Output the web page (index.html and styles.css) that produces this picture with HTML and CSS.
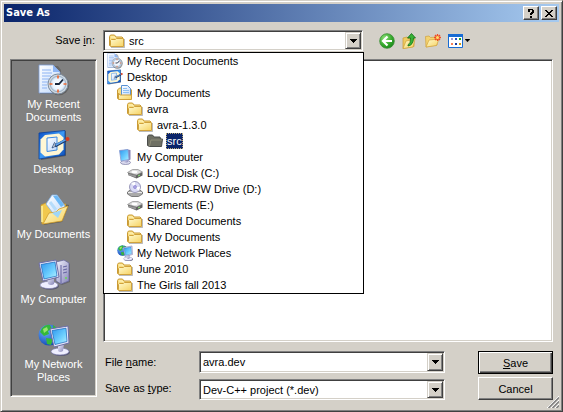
FILE: index.html
```html
<!DOCTYPE html>
<html lang="en">
<head>
<meta charset="utf-8">
<title>Save As</title>
<link rel="stylesheet" href="styles.css">
</head>
<body>
<svg class="defs" width="0" height="0" aria-hidden="true">
  <defs>
    <linearGradient id="gFolder" x1="0" y1="0" x2="1" y2="1"><stop offset="0" stop-color="#fffbd0"/><stop offset="1" stop-color="#f6d262"/></linearGradient>
    <linearGradient id="gPaper" x1="0" y1="0" x2="1" y2="1"><stop offset="0" stop-color="#fff"/><stop offset="1" stop-color="#bfd8fb"/></linearGradient>
    <linearGradient id="gScreen" x1="0" y1="0" x2="1" y2="1"><stop offset="0" stop-color="#2d96ee"/><stop offset=".6" stop-color="#6fd0ff"/><stop offset="1" stop-color="#b8f2ff"/></linearGradient>
    <linearGradient id="gCase" x1="0" y1="0" x2="1" y2="1"><stop offset="0" stop-color="#f4f4ff"/><stop offset="1" stop-color="#8584b8"/></linearGradient>
    <linearGradient id="gBlue" x1="0" y1="0" x2="1" y2="1"><stop offset="0" stop-color="#0c4fc4"/><stop offset=".5" stop-color="#3c9af6"/><stop offset="1" stop-color="#0a48b4"/></linearGradient>
    <radialGradient id="gGreen" cx=".35" cy=".3" r=".8"><stop offset="0" stop-color="#8ee07a"/><stop offset=".6" stop-color="#35a92b"/><stop offset="1" stop-color="#168018"/></radialGradient>
    <radialGradient id="gGlobe" cx=".35" cy=".3" r=".8"><stop offset="0" stop-color="#6fb4ff"/><stop offset="1" stop-color="#0b3fb0"/></radialGradient>
    <radialGradient id="gClock"><stop offset="0" stop-color="#fff"/><stop offset=".7" stop-color="#eaf4ff"/><stop offset="1" stop-color="#b9cfe6"/></radialGradient>
  </defs>
  <symbol id="recent" viewBox="0 0 32 32">
    <path d="M2 2h18l3 4v24H2z" fill="#444" opacity=".4"/>
    <path d="M1 1h14l7 7v21H1z" fill="url(#gPaper)" stroke="#7e9ed8" stroke-width=".8"/>
    <path d="M15 1v7h7z" fill="#8fb6f4"/>
    <path d="M4 6h9M4 9h10M4 12h9M4 15h7M4 18h6M4 21h5M4 24h5" stroke="#8db4f3" stroke-width="1.2"/>
    <circle cx="21" cy="21" r="10.3" fill="#505050" opacity=".6"/>
    <circle cx="20" cy="20" r="10" fill="#ced8e1" stroke="#7e8c9c"/>
    <circle cx="20" cy="20" r="7.8" fill="url(#gClock)" stroke="#8fa3b8" stroke-width=".7"/>
    <path d="M20 11.5v3M20 25.5v3M11.5 20h3M25.5 20h3" stroke="#f06a32" stroke-width="1.7"/>
    <path d="M17 20h4l4-4.5" fill="none" stroke="#18263c" stroke-width="1.8"/>
  </symbol>
  <symbol id="desktop" viewBox="0 0 32 32">
    <path d="M3 4l25-2v25L3 31z" fill="#333" opacity=".5"/>
    <path d="M1 4L27 1.500v24.500L1 30z" fill="url(#gBlue)" stroke="#0a419c" stroke-width=".8"/>
    <path d="M7 6l14-1.500 4.500 4v12l-4.500 5-14 2-4.500-4v-13z" fill="#fff7d5"/>
    <path d="M9 9l10-1v13l-10 1.500z" fill="url(#gPaper)" stroke="#3c8ae2" stroke-width="1"/>
    <path d="M14 19l2.500-5.500 2.500 3z" fill="#eee" stroke="#25477c" stroke-width=".8"/>
    <path d="M17 17l11-6" stroke="#1c3460" stroke-width="3"/>
    <path d="M17.500 16.300l10-5.500" stroke="#5ba3ee" stroke-width="1.600"/>
    <circle cx="29.500" cy="10" r="2" fill="#d83a1c"/>
  </symbol>
  <symbol id="docs" viewBox="0 0 32 32">
    <path d="M5 31l19-3 7-17-5-1z" fill="#333" opacity=".5"/>
    <path d="M3 11l5-2 3 2 17-1-4 15L4 30z" fill="#f1c84d" stroke="#c6952a" stroke-width=".8"/>
    <path d="M14 1h5l8 11-10 10L8 10z" fill="url(#gPaper)" stroke="#7fb0e6" stroke-width=".8"/>
    <path d="M15 2l8 11 3-2-7-9.500z" fill="#6bb8f6"/>
    <path d="M12 8l6 8" stroke="#b6dcfb" stroke-width="3"/>
    <path d="M5 30l6-11 7-1 3-3 9-3-6 15z" fill="url(#gFolder)" stroke="#d09d2b" stroke-width=".8"/>
    <path d="M14 19l10-3-4 8z" fill="#9ed6f8"/>
    <path d="M4 12v16" stroke="#fff3a1" stroke-width="1.500"/>
  </symbol>
  <symbol id="computer" viewBox="0 0 32 32">
    <path d="M18 4l9-2 5 3v18l-8 3-6-3z" fill="#555" opacity=".6"/>
    <path d="M18 3l8-2 5 3v18l-8 3-5-3z" fill="url(#gCase)" stroke="#68689d" stroke-width=".8"/>
    <path d="M23 6v18M25 8l4-1M25 11l4-1M25 14l4-1" stroke="#6361a0"/>
    <circle cx="28" cy="19" r="1" fill="#69d955"/>
    <ellipse cx="12" cy="27" rx="9" ry="3.800" fill="#575771"/>
    <ellipse cx="11" cy="26" rx="9" ry="3.600" fill="#eeeeff" stroke="#8585b4" stroke-width=".7"/>
    <path d="M9 19l7-1v7q-3 2-6 0z" fill="url(#gCase)"/>
    <path d="M1 4l17-3 3 17-16 4z" fill="#e9e9fa" stroke="#6c6da6"/>
    <path d="M3 5.500L17 3l2 14-13 3z" fill="url(#gScreen)" stroke="#1764b9" stroke-width=".7"/>
  </symbol>
  <symbol id="monitor" viewBox="0 0 16 16">
    <ellipse cx="8.500" cy="13.500" rx="5" ry="2" fill="#dcdcf0" stroke="#77779f" stroke-width=".7"/>
    <path d="M7 10h4v3q-2 1-4 0z" fill="url(#gCase)"/>
    <path d="M2.500 1.500l8-1 3 .500v9.500l-2 1z" fill="#8583b5"/>
    <path d="M2.500 1.500L11 .500l1 10-8 1.500z" fill="url(#gScreen)" stroke="#8a9bd0" stroke-width=".8"/>
  </symbol>
  <symbol id="network" viewBox="0 0 32 32">
    <circle cx="11" cy="11" r="10.500" fill="url(#gGlobe)"/>
    <path d="M4 4q4-4 8-3l2 4-4 2 1 3-5 2-4-4zM8 14l7 1-2 6-4-1zM15 1l5 4-5 2z" fill="#35b83b"/>
    <path d="M5 5l4-2 1 3-4 3z" fill="#9ae56c"/>
    <ellipse cx="23" cy="28.500" rx="9" ry="3.500" fill="#575771"/>
    <ellipse cx="22" cy="27.500" rx="9" ry="3.500" fill="#eeeeff" stroke="#7878a8" stroke-width=".7"/>
    <path d="M20 20h6l-1 7q-3 2-5 0z" fill="url(#gCase)"/>
    <path d="M12 5l18-3 1 17-15 4z" fill="#e9e9fa" stroke="#6c6da6"/>
    <path d="M14 6.500l14-2.300 1 13.300-12 3z" fill="url(#gScreen)" stroke="#1764b9" stroke-width=".7"/>
  </symbol>
  <symbol id="folder" viewBox="0 0 16 16">
    <path d="M2 14.500h13.500V6" fill="none" stroke="#777" opacity=".5"/>
    <path d="M.5 12.500v-9l1-1.500h4l1.500 2h6l1 1v8.500h-12z" fill="#f9de83" stroke="#c99a35"/>
    <path d="M2.500 13.500l-1-1v-5l1-1h3.500l1.500-1h6.500l.5.500v7.500z" fill="url(#gFolder)" stroke="#d0a23c"/>
    <path d="M2 4h3.500l1 1.500" fill="none" stroke="#fff7c5"/>
  </symbol>
  <symbol id="folder-selected" viewBox="0 0 16 16">
    <path d="M.5 12.500v-9l1-1.500h4l1.500 2h6l.5 2h2l-1 7.500h-12z" fill="#6f7064" stroke="#4b4d4a"/>
    <path d="M2.500 13l1.500-6h11" fill="none" stroke="#8e8d78"/>
  </symbol>
  <symbol id="docs-small" viewBox="0 0 16 16">
    <path d="M.5 13.500V5l2-2h10l2 2v8.500z" fill="#f9de83" stroke="#c99a35"/>
    <path d="M4.500 11V.500h6l3 3V11z" fill="url(#gPaper)" stroke="#5991d3"/>
    <path d="M6 3.500h4M6 5.500h6M6 7.500h6" stroke="#8cc0f3"/>
    <path d="M1.500 14.500V8l1.500 2h11l.5 1v3.500z" fill="url(#gFolder)" stroke="#d0a23c"/>
  </symbol>
  <symbol id="drive" viewBox="0 0 16 16">
    <path d="M1 8l5-3h5l4.500 2.500v3l-6 3L1 10z" fill="#626262"/>
    <path d="M.5 7.500l5-3H11l4.500 2.500-6 3z" fill="#dedede" stroke="#8b8b8b" stroke-width=".7"/>
    <ellipse cx="7.500" cy="7" rx="3" ry="1.200" fill="#fff"/>
    <path d="M1 8.500l8 2v2L1 10z" fill="#999"/>
    <path d="M11 11l2-1" stroke="#8eed78"/>
  </symbol>
  <symbol id="cd" viewBox="0 0 16 16">
    <path d="M.5 11l4-3h7l4 3v2l-4 2.500h-7L.500 13z" fill="#aaa" stroke="#666" stroke-width=".8"/>
    <path d="M1 11.500h14" stroke="#eee"/>
    <circle cx="8" cy="6" r="5.500" fill="#dadbf4" stroke="#8483a9" stroke-width=".8"/>
    <path d="M8 6L4 2l4-1zM8 6l4 4 1-4z" fill="#fff"/>
    <circle cx="8" cy="6" r="1.700" fill="#7268cb"/><circle cx="8" cy="6" r=".7" fill="#fff"/>
  </symbol>
  <symbol id="back" viewBox="0 0 16 16">
    <circle cx="8" cy="8" r="7.300" fill="url(#gGreen)" stroke="#3a8e35" stroke-width=".8"/>
    <path d="M8.500 3.500L4 8l4.500 4.500M4.500 8H13" fill="none" stroke="#fff" stroke-width="2.200"/>
  </symbol>
  <symbol id="up" viewBox="0 0 16 16">
    <path d="M1 15.500V5l4-1 1 1.500 6-1v9z" fill="#f0cb60" stroke="#c99a35" stroke-width=".7"/>
    <path d="M1 15.500l3-7.500 9-2-2 8z" fill="url(#gFolder)" stroke="#d0a238" stroke-width=".7"/>
    <path d="M6 12q3-2 2.500-7H5.500L9.500.500l4 4.500h-2q0 7-5.500 8z" fill="#37b336" stroke="#126d18" stroke-width=".8"/>
  </symbol>
  <symbol id="new-folder" viewBox="0 0 16 16">
    <path d="M1 14L.500 3.500 4 3l1.500 1.500 6-.5.500 8z" fill="#f4d370" stroke="#cfa13c" stroke-width=".7"/>
    <path d="M1 14l3-7 10-1-2.500 6.500z" fill="url(#gFolder)" stroke="#d2a43b" stroke-width=".7"/>
    <path d="M12.500 1v7M9 4.500h7M10 2l5 5M15 2l-5 5" stroke="#f04c25" stroke-width="1.300"/>
    <circle cx="12.500" cy="4.500" r="1.500" fill="#ffdf69"/>
  </symbol>
  <symbol id="view" viewBox="0 0 16 16">
    <path d="M.5 1.500h14v13H.500z" fill="#fff" stroke="#176bd3"/>
    <path d="M0 1h15v3H0z" fill="#176bd3"/>
    <path d="M3 5h2v2H3z" fill="#9c98d1"/><path d="M7 5h2v2H7z" fill="#2457c7"/><path d="M11 5h2v2h-2z" fill="#19a328"/>
    <path d="M3 10h2v2H3z" fill="#f58058"/><path d="M7 10h2v2H7z" fill="#153a9d"/><path d="M11 10h2v2h-2z" fill="#d39b0d"/>
  </symbol>
  <symbol id="arrow" viewBox="0 0 7 4"><path d="M0 0h7v1H6v1H5v1H4v1H3V3H2V2H1V1H0z" fill="#000"/></symbol>
</svg>

<main class="window">
  <header class="titlebar">
    <h1 class="title">Save As</h1>
    <button class="caption-button" type="button" aria-label="Help"><svg width="8" height="9" viewBox="0 0 8 9"><path d="M1 0h5v1h1v3H6v1H5v1H3V4h1V3h1V1H3v2H1zM3 7h2v2H3z"/></svg></button>
    <button class="caption-button" type="button" aria-label="Close"><svg width="8" height="7" viewBox="0 0 8 7"><path d="M0 0h2v1h1v1h2V1h1V0h2v1H7v1H6v1H5v1h1v1h1v1h1v1H6V6H5V5H3v1H2v1H0V6h1V5h1V4h1V3H2V2H1V1H0z"/></svg></button>
  </header>

  <form class="content">
    <div class="lookup">
      <label class="lookup-label" for="folder-select">Save <u>i</u>n:</label>
      <div class="combo lookup-combo">
        <svg class="icon"><use href="#folder"/></svg>
        <select class="field" id="folder-select"><option>src</option></select>
        <span class="drop-button"><svg class="arrow"><use href="#arrow"/></svg></span>
        <ul class="dropdown" role="listbox" aria-label="Folders">
          <li class="entry" role="option"><svg class="icon"><use href="#recent"/></svg><span class="entry-name">My Recent Documents</span></li>
          <li class="entry" role="option"><svg class="icon"><use href="#desktop"/></svg><span class="entry-name">Desktop</span></li>
          <li class="entry level-1" role="option"><svg class="icon"><use href="#docs-small"/></svg><span class="entry-name">My Documents</span></li>
          <li class="entry level-2" role="option"><svg class="icon"><use href="#folder"/></svg><span class="entry-name">avra</span></li>
          <li class="entry level-3" role="option"><svg class="icon"><use href="#folder"/></svg><span class="entry-name">avra-1.3.0</span></li>
          <li class="entry level-4" role="option" aria-selected="true"><svg class="icon"><use href="#folder-selected"/></svg><span class="entry-name">src</span></li>
          <li class="entry level-1" role="option"><svg class="icon"><use href="#monitor"/></svg><span class="entry-name">My Computer</span></li>
          <li class="entry level-2" role="option"><svg class="icon"><use href="#drive"/></svg><span class="entry-name">Local Disk (C:)</span></li>
          <li class="entry level-2" role="option"><svg class="icon"><use href="#cd"/></svg><span class="entry-name">DVD/CD-RW Drive (D:)</span></li>
          <li class="entry level-2" role="option"><svg class="icon"><use href="#drive"/></svg><span class="entry-name">Elements (E:)</span></li>
          <li class="entry level-2" role="option"><svg class="icon"><use href="#folder"/></svg><span class="entry-name">Shared Documents</span></li>
          <li class="entry level-2" role="option"><svg class="icon"><use href="#folder"/></svg><span class="entry-name">My Documents</span></li>
          <li class="entry level-1" role="option"><svg class="icon"><use href="#network"/></svg><span class="entry-name">My Network Places</span></li>
          <li class="entry level-1" role="option"><svg class="icon"><use href="#folder"/></svg><span class="entry-name">June 2010</span></li>
          <li class="entry level-1" role="option"><svg class="icon"><use href="#folder"/></svg><span class="entry-name">The Girls fall 2013</span></li>
        </ul>
      </div>
      <div class="toolbar">
        <button class="tool" type="button" aria-label="Back"><svg class="icon"><use href="#back"/></svg></button>
        <button class="tool" type="button" aria-label="Up one level"><svg class="icon"><use href="#up"/></svg></button>
        <button class="tool" type="button" aria-label="New folder"><svg class="icon"><use href="#new-folder"/></svg></button>
        <button class="tool" type="button" aria-label="Views"><svg class="icon"><use href="#view"/></svg><svg class="arrow-small"><use href="#arrow"/></svg></button>
      </div>
    </div>

    <div class="panes">
      <nav class="places">
        <button class="place" type="button"><svg class="icon-large"><use href="#recent"/></svg>My Recent<br>Documents</button>
        <button class="place" type="button"><svg class="icon-large"><use href="#desktop"/></svg>Desktop</button>
        <button class="place" type="button"><svg class="icon-large"><use href="#docs"/></svg>My Documents</button>
        <button class="place" type="button"><svg class="icon-large"><use href="#computer"/></svg>My Computer</button>
        <button class="place" type="button"><svg class="icon-large"><use href="#network"/></svg>My Network<br>Places</button>
      </nav>
      <div class="main">
        <div class="files"></div>
        <div class="details">
          <label class="details-label" for="file-name">File <u>n</u>ame:</label>
          <div class="combo">
            <input class="field" id="file-name" type="text" value="avra.dev">
            <button class="drop-button" type="button" aria-label="Recent names"><svg class="arrow"><use href="#arrow"/></svg></button>
          </div>
          <button class="button default" type="submit"><span><u>S</u>ave</span></button>
          <label class="details-label" for="file-type">Save as <u>t</u>ype:</label>
          <div class="combo type-combo">
            <select class="field" id="file-type"><option>Dev-C++ project (*.dev)</option></select>
            <span class="drop-button"><svg class="arrow"><use href="#arrow"/></svg></span>
          </div>
          <button class="button" type="button">Cancel</button>
        </div>
      </div>
    </div>
  </form>
  <svg class="grip" width="12" height="12" viewBox="0 0 12 12" aria-hidden="true">
    <path d="M0 12L12 0M4 12l8-8M8 12l4-4" stroke="#fff"/>
    <path d="M1.500 12L12 1.500M5.500 12L12 5.500M9.500 12L12 9.500" stroke="#808080" stroke-width="1.500"/>
  </svg>
</main>
</body>
</html>
```
FILE: styles.css
```css
:root {
  --face: #d4d0c8;
  --shadow: #808080;
  --dark: #404040;
  --navy: #0a246a;
}

* {
  box-sizing: border-box;
}

body {
  margin: 0;
  background: var(--face);
  color: #000;
  font: 11px/16px "Liberation Sans", Arial, sans-serif;
}

button,
input,
select {
  margin: 0;
  padding: 0;
  border: 0;
  border-radius: 0;
  background: transparent;
  color: inherit;
  font: inherit;
}

.defs {
  position: absolute;
}

.icon {
  display: block;
  flex: none;
  width: 16px;
  height: 16px;
}

.window {
  position: relative;
  display: flex;
  flex-direction: column;
  min-height: 100vh;
  padding: 3px;
  border: 1px solid;
  border-color: var(--face) var(--dark) var(--dark) var(--face);
  background: var(--face);
  box-shadow: inset 1px 1px #fff, inset -1px -1px var(--shadow);
}

.titlebar {
  display: flex;
  align-items: center;
  gap: 2px;
  height: 18px;
  padding: 0 2px;
  background: linear-gradient(to right, var(--navy), #a6caf0);
}

.title {
  flex: 1;
  margin: 0;
  color: #fff;
  font: bold 11px/18px "DejaVu Sans Condensed", "DejaVu Sans", sans-serif;
}

.caption-button,
.drop-button {
  display: flex;
  align-items: center;
  justify-content: center;
  flex: none;
  width: 16px;
  background: var(--face);
}

.caption-button {
  height: 14px;
  border: 1px solid;
  border-color: #fff var(--dark) var(--dark) #fff;
  box-shadow: inset -1px -1px var(--shadow);
}

.content {
  display: flex;
  flex: 1;
  flex-direction: column;
  gap: 8px;
  padding: 8px 6px;
}

.lookup {
  display: flex;
}

.lookup-label {
  width: 93px;
  padding-right: 8px;
  line-height: 21px;
  text-align: right;
}

.combo {
  position: relative;
  display: flex;
  height: 22px;
  padding: 1px;
  border: 1px solid;
  border-color: var(--shadow) #fff #fff var(--shadow);
  background: #fff;
  box-shadow: inset 1px 1px var(--dark), inset -1px -1px var(--face);
}

.lookup-combo {
  flex: 1;
  align-items: center;
  height: 21px;
  padding-left: 5px;
}

.field {
  flex: 1;
  min-width: 0;
  padding: 0 2px;
  appearance: none;
  outline: 0;
}

.lookup-combo .field {
  padding-left: 4px;
}

.drop-button {
  align-self: stretch;
  border: 1px solid;
  border-color: var(--face) var(--dark) var(--dark) var(--face);
  box-shadow: inset 1px 1px #fff, inset -1px -1px var(--shadow);
  pointer-events: none;
}

.arrow {
  width: 7px;
  height: 4px;
}

.arrow-small {
  width: 5px;
  height: 3px;
}

.dropdown {
  position: absolute;
  top: 21px;
  right: -2px;
  left: -1px;
  z-index: 1;
  margin: 0;
  padding: 0;
  border: 1px solid #000;
  background: #fff;
  list-style: none;
}

.entry {
  display: flex;
  gap: 3px;
  padding-left: 3px;
}

.level-1 {
  padding-left: 13px;
}

.level-2 {
  padding-left: 23px;
}

.level-3 {
  padding-left: 33px;
}

.level-4 {
  padding-left: 43px;
}

.entry-name {
  padding: 0 1px;
}

.entry[aria-selected="true"] .entry-name {
  background: var(--navy);
  color: #fff;
  outline: 1px dotted #b8a878;
  outline-offset: -1px;
}

.toolbar {
  display: flex;
  align-items: center;
  gap: 7px;
  width: 190px;
  padding-left: 16px;
}

.tool {
  display: flex;
  align-items: center;
  gap: 1px;
}

.panes {
  display: flex;
  flex: 1;
  gap: 6px;
}

.places {
  flex: none;
  width: 87px;
  margin-bottom: 3px;
  padding-top: 4px;
  border: 1px solid;
  border-color: var(--shadow) #fff #fff var(--shadow);
  background: var(--shadow);
  box-shadow: inset 1px 1px var(--dark), inset -1px -1px var(--face);
}

.place {
  display: flex;
  flex-direction: column;
  align-items: center;
  width: 100%;
  height: 65px;
  color: #fff;
  line-height: 13px;
  text-align: center;
}

.icon-large {
  display: block;
  width: 32px;
  height: 32px;
  margin-bottom: 2px;
}

.main {
  display: flex;
  flex: 1;
  flex-direction: column;
  gap: 9px;
}

.files {
  flex: 1;
  border: 1px solid;
  border-color: var(--shadow) #fff #fff var(--shadow);
  background: #fff;
  box-shadow: inset 1px 1px var(--dark), inset -1px -1px var(--face);
}

.details {
  display: grid;
  grid-template-columns: 96px 1fr 108px;
  grid-template-rows: 23px 23px;
  row-gap: 3px;
}

.details-label {
  padding-left: 2px;
  line-height: 23px;
}

.type-combo {
  align-self: end;
  height: 21px;
}

.button {
  margin-left: 33px;
  border: 1px solid;
  border-color: #fff var(--dark) var(--dark) #fff;
  background: var(--face);
  box-shadow: inset -1px -1px var(--shadow);
}

.default {
  border-color: #000;
  box-shadow: inset 1px 1px #fff, inset -1px -1px var(--dark), inset -2px -2px var(--shadow);
}

.grip {
  position: absolute;
  right: 3px;
  bottom: 3px;
}
```
